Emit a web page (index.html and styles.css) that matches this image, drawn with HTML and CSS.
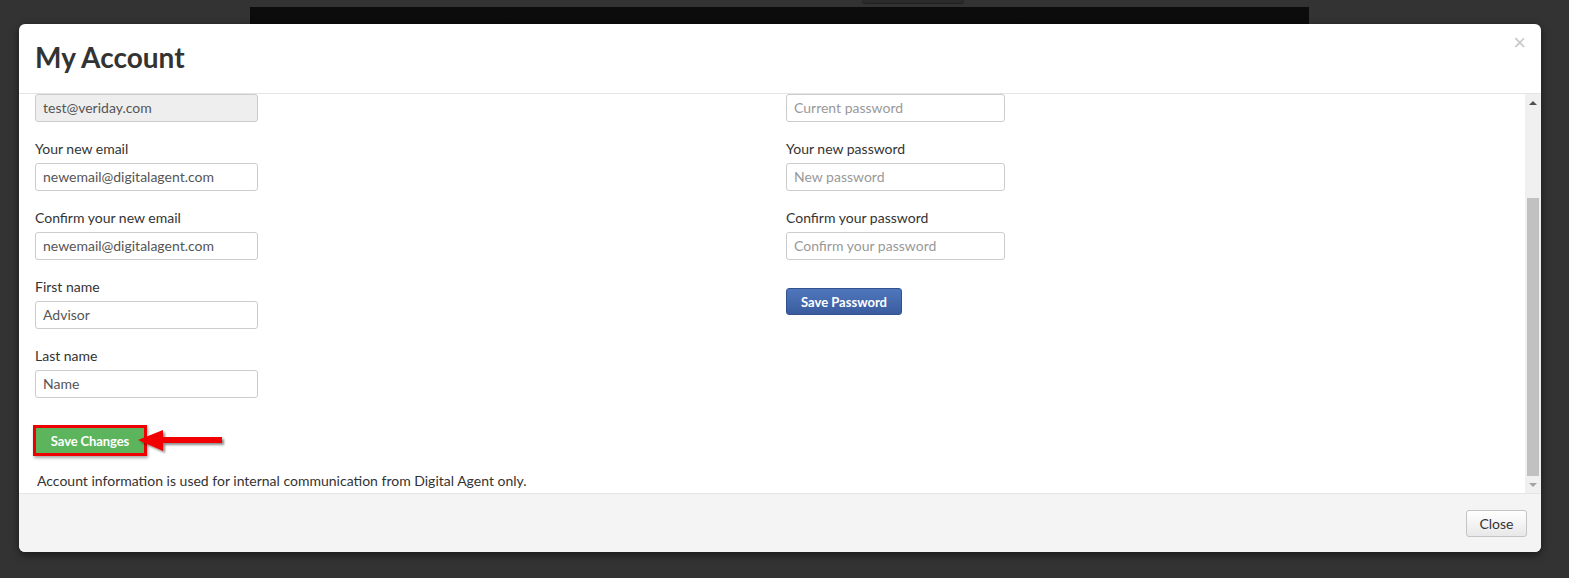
FILE: index.html
```html
<!DOCTYPE html>
<html lang="en">
<head>
<meta charset="utf-8">
<title>My Account</title>
<link rel="stylesheet" href="styles.css">
</head>
<body>
<div class="page-under">
  <div class="page-tab"></div>
  <div class="page-dark"></div>
</div>
<div class="modal">
  <div class="modal-header">
    <h1 class="modal-title">My Account</h1>
    <span class="close-x">&times;</span>
  </div>
  <div class="modal-body">
    <div class="scroll-area">
      <div class="scroll-content">
        <div class="columns">
          <div class="col">
            <div class="form-group">
              <div class="input input-left input-disabled">test@veriday.com</div>
            </div>
            <div class="form-group">
              <label class="lbl">Your new email</label>
              <div class="input input-left">newemail@digitalagent.com</div>
            </div>
            <div class="form-group">
              <label class="lbl">Confirm your new email</label>
              <div class="input input-left">newemail@digitalagent.com</div>
            </div>
            <div class="form-group">
              <label class="lbl">First name</label>
              <div class="input input-left">Advisor</div>
            </div>
            <div class="form-group">
              <label class="lbl">Last name</label>
              <div class="input input-left">Name</div>
            </div>
            <div class="save-row">
              <button class="btn-green">Save Changes</button>
              <svg class="arrow" width="100" height="34" viewBox="0 0 100 34">
                <defs>
                  <filter id="sh" x="-20%" y="-40%" width="140%" height="180%">
                    <feDropShadow dx="2" dy="2" stdDeviation="1.2" flood-color="#000" flood-opacity="0.45"/>
                  </filter>
                </defs>
                <g filter="url(#sh)">
                  <polygon points="2,15 27,5 27,12 86,12 86,18 27,18 27,26" fill="#f20000"/>
                </g>
              </svg>
            </div>
          </div>
          <div class="col">
            <div class="form-group">
              <div class="input input-right placeholder">Current password</div>
            </div>
            <div class="form-group">
              <label class="lbl">Your new password</label>
              <div class="input input-right placeholder">New password</div>
            </div>
            <div class="form-group">
              <label class="lbl">Confirm your password</label>
              <div class="input input-right placeholder">Confirm your password</div>
            </div>
            <button class="btn-blue">Save Password</button>
          </div>
        </div>
        <p class="note">Account information is used for internal communication from Digital Agent only.</p>
      </div>
    </div>
    <div class="scrollbar">
      <div class="sb-btn"><span class="tri-up"></span></div>
      <div class="sb-track"><div class="sb-thumb"></div></div>
      <div class="sb-btn"><span class="tri-down"></span></div>
    </div>
  </div>
  <div class="modal-footer">
    <button class="btn-default">Close</button>
  </div>
</div>
</body>
</html>
```

FILE: styles.css
```css
* { box-sizing: border-box; }
html, body { margin: 0; padding: 0; }
body {
  width: 1569px;
  height: 578px;
  background: #333333;
  font-family: Lato, "Open Sans", "Liberation Sans", sans-serif;
  color: #333;
  overflow: hidden;
  position: relative;
}
.page-under {
  position: absolute;
  inset: 0;
}
.page-tab {
  position: absolute;
  left: 862px;
  top: 0;
  width: 102px;
  height: 3px;
  background: #2b2b2b;
  border-radius: 0 0 3px 3px;
  box-shadow: 0 1px 1px rgba(0,0,0,0.4);
}
.page-dark {
  position: absolute;
  left: 250px;
  top: 7px;
  width: 1059px;
  height: 500px;
  background: linear-gradient(#0c0c0c, #050505);
}
.modal {
  position: absolute;
  left: 19px;
  top: 24px;
  width: 1522px;
  height: 528px;
  background: #fff;
  border-radius: 6px;
  box-shadow: 0 3px 9px rgba(0,0,0,0.5);
  display: flex;
  flex-direction: column;
  overflow: hidden;
}
.modal-header {
  height: 70px;
  flex: none;
  border-bottom: 1px solid #e5e5e5;
  display: flex;
  justify-content: space-between;
  align-items: center;
  padding: 0 15px 0 16px;
}
.modal-title {
  margin: 0;
  font-size: 28px;
  font-weight: 700;
  color: #333;
  line-height: 1;
  margin-top: -3px;
}
.close-x {
  align-self: flex-start;
  margin-top: 8px;
  font-size: 22px;
  line-height: 22px;
  color: #c9c9c9;
  font-family: "Liberation Sans", sans-serif;
}
.modal-body {
  height: 399px;
  flex: none;
  display: flex;
}
.scroll-area {
  flex: 1;
  overflow: hidden;
}
.scroll-content {
  padding: 0 16px;
}
.columns {
  display: grid;
  grid-template-columns: 751px 1fr;
}
.form-group {
  margin-bottom: 17px;
}
.lbl {
  display: block;
  font-size: 14px;
  line-height: 20px;
  margin-bottom: 4px;
  color: #333;
}
.input {
  height: 28px;
  border: 1px solid #cccccc;
  border-radius: 3px;
  padding: 0 7px;
  font-size: 14px;
  line-height: 26px;
  color: #555;
  background: #fff;
}
.input-left { width: 223px; }
.input-right { width: 219px; }
.input-disabled { background: #eeeeee; }
.placeholder { color: #999; }
.save-row {
  margin-top: 27px;
  display: flex;
  align-items: center;
  height: 31px;
}
.btn-green {
  height: 31px;
  width: 114px;
  margin-left: -2px;
  border: 3px solid #ee0000;
  background: #5cb55c;
  color: #fff;
  font-family: Lato, "Liberation Sans", sans-serif;
  font-size: 13px;
  font-weight: 700;
  padding: 0;
  box-shadow: 1px 2px 3px rgba(0,0,0,0.35);
  letter-spacing: -0.1px;
}
.arrow {
  margin-left: -11px;
  margin-top: 2px;
}
.btn-blue {
  margin-top: 11px;
  width: 116px;
  height: 27px;
  border: 1px solid #31528e;
  border-radius: 3px;
  background: linear-gradient(#4f77bd, #3a5c9e);
  color: #fff;
  font-family: Lato, "Liberation Sans", sans-serif;
  font-size: 13px;
  font-weight: 700;
  padding: 0;
}
.note {
  margin: 15px 0 0 2px;
  font-size: 14px;
  line-height: 20px;
  color: #333;
}
.scrollbar {
  width: 16px;
  flex: none;
  background: #f0f0f0;
  display: flex;
  flex-direction: column;
}
.sb-btn {
  height: 17px;
  display: flex;
  align-items: center;
  justify-content: center;
  flex: none;
}
.tri-up {
  width: 0; height: 0;
  border-left: 4px solid transparent;
  border-right: 4px solid transparent;
  border-bottom: 4px solid #505050;
}
.tri-down {
  width: 0; height: 0;
  border-left: 4px solid transparent;
  border-right: 4px solid transparent;
  border-top: 4px solid #a3a3a3;
}
.sb-track {
  flex: 1;
  position: relative;
}
.sb-thumb {
  margin: 87px 2px 0 2px;
  height: 278px;
  background: #c1c1c1;
}
.modal-footer {
  flex: 1;
  border-top: 1px solid #e5e5e5;
  background: #f4f4f4;
  display: flex;
  justify-content: flex-end;
  align-items: center;
  padding-right: 14px;
}
.btn-default {
  width: 61px;
  height: 27px;
  border: 1px solid #c4c4c4;
  border-radius: 3px;
  background: linear-gradient(#ffffff, #e8e8e8);
  font-family: Lato, "Liberation Sans", sans-serif;
  font-size: 14px;
  color: #333;
  padding: 0;
}
```
